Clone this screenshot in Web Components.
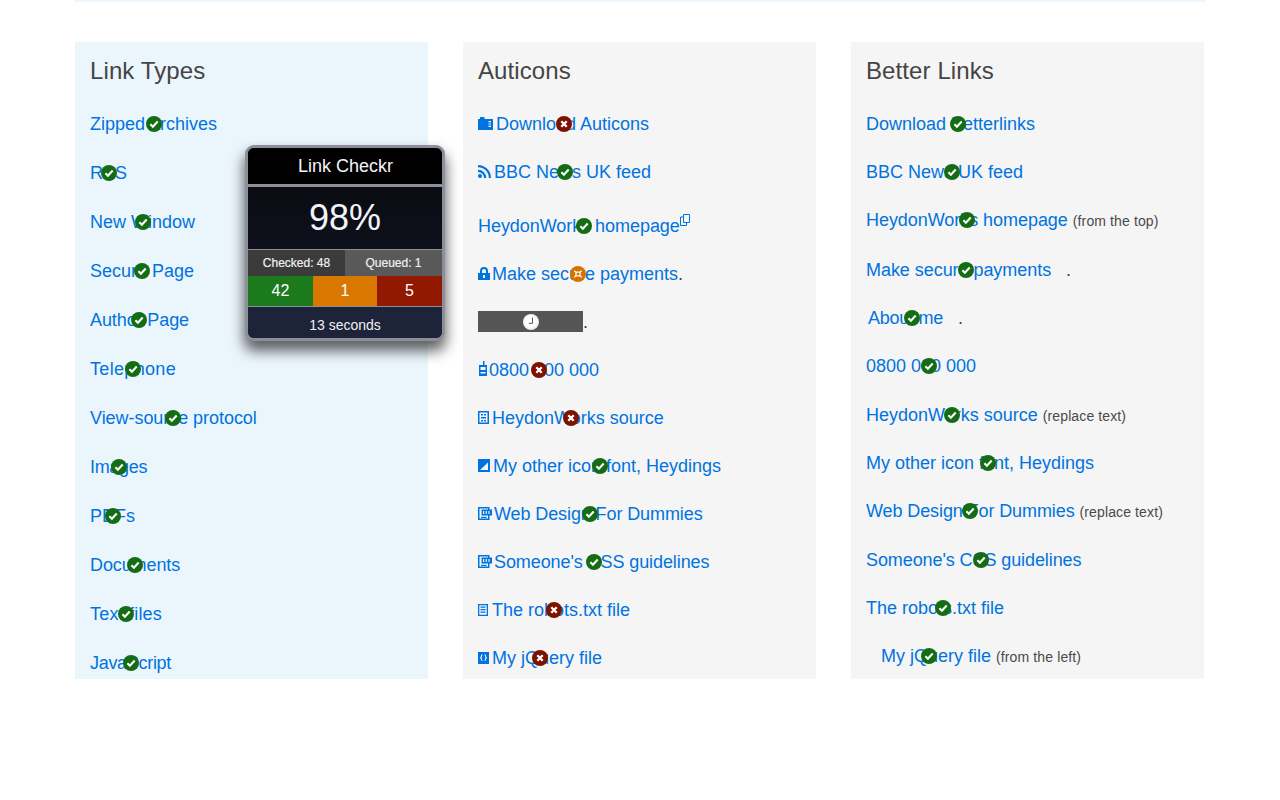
<!DOCTYPE html>
<html lang="en">
<head>
<meta charset="utf-8">
<title>Link Checkr</title>
<style>
html,body{margin:0;padding:0;background:#fff;height:800px;overflow:hidden}
body{font-family:"Liberation Sans",Arial,sans-serif;color:#3c3c3c}
</style>
</head>
<body>
<template id="t-page"><style>
:host{display:block;width:1130px;margin:0 auto 0 75px;border-top:2px solid #ebf6fc;padding-top:40px}
.grid{display:grid;grid-template-columns:repeat(3,353px);column-gap:35px;height:637px;overflow:hidden;position:relative}
</style><div class="grid"><slot></slot></div></template>

<template id="t-card"><style>
:host{display:block;background:#f5f5f5;padding:0 15px;height:637px;overflow:hidden;box-sizing:border-box}
:host([tint]){background:#ebf6fc}
h2{font:400 24px/28px "Liberation Sans",Arial,sans-serif;color:#444;margin:0;padding:15px 0 26px;letter-spacing:.1px}
</style><h2></h2><slot></slot></template>

<template id="t-row"><style>
:host{display:block;height:var(--h,48px);font-size:18px;line-height:26px;color:#3c3c3c;white-space:nowrap}
::slotted(small){font-size:14px;letter-spacing:.12px;color:#4a4a4a}
</style><slot></slot></template>

<template id="t-link"><style>
:host{display:inline-block;position:relative;color:#0073e0;line-height:26px;vertical-align:top}
:host([hidden-text]){background:#555;height:21px;width:105px;margin-top:2px}
.b{position:absolute;left:50%;top:50%;margin:-8px 0 0 -8px;width:16px;height:16px;border-radius:50%;display:flex;align-items:center;justify-content:center}
.ok{background:#146c14}.err{background:#7e1100}.warn{background:#d67300}.wait{background:radial-gradient(circle at 45% 45%,#fff 40%,#d8d8d8)}
svg{width:12px;height:12px;display:block}
</style><slot></slot><span class="b" aria-hidden="true"></span></template>

<template id="t-icon"><style>
:host{display:inline-block;width:var(--w,14px);height:14px;margin-right:var(--m,4px);vertical-align:0;color:#0073e0}
svg{display:block;width:100%;height:100%;overflow:visible}
</style><span></span></template>

<template id="t-panel"><style>
:host{display:block;position:absolute;left:170px;top:103px;width:200px;box-sizing:border-box;border:3px solid #8c8f99;border-radius:9px;background:#1d2338;color:#fff;overflow:hidden;text-align:center;font-family:"Liberation Sans",Arial,sans-serif;box-shadow:0 9px 14px 1px rgba(0,0,0,.62)}
.head{background:#000;height:36px;font-size:18px;line-height:36px;border-bottom:3px solid #8c8f99;color:#f4f4f8;padding-left:1px}
.pct{height:62px;line-height:62px;font-size:36px;color:#f2f3fa;background:linear-gradient(#0a0c12,#0e111c);border-bottom:1px solid #8c8f99}
.two{display:grid;grid-template-columns:97px 97px;height:25px;line-height:27px;font-size:12px;font-weight:400;border-bottom:1px solid #8c8f99;color:#f0f0f0;-webkit-text-stroke:.2px #f0f0f0}
.two span:first-child{background:#3b3b3b}.two span:last-child{background:#595959}
.three{display:grid;grid-template-columns:65px 64px 65px;height:30px;line-height:30px;font-size:16px;border-bottom:1px solid #8c8f99}
.g{background:#1b7a1b}.o{background:#d97800}.r{background:#901900}
.foot{height:31px;line-height:36px;font-size:14px;background:#1d2338;color:#f0f0f4}
</style>
<div class="head">Link Checkr</div>
<div class="pct">98%</div>
<div class="two"><span>Checked: 48</span><span>Queued: 1</span></div>
<div class="three"><span class="g">42</span><span class="o">1</span><span class="r">5</span></div>
<div class="foot">13 seconds</div>
</template>

<lc-page>
  <lc-card heading="Link Types" tint>
    <lc-row h="49"><lc-link s="ok">Zipped archives</lc-link></lc-row>
    <lc-row h="49"><lc-link s="ok">RSS</lc-link></lc-row>
    <lc-row h="49"><lc-link s="ok">New Window</lc-link></lc-row>
    <lc-row h="49"><lc-link s="ok">Secure Page</lc-link></lc-row>
    <lc-row h="49"><lc-link s="ok" style="letter-spacing:-.1px">Author Page</lc-link></lc-row>
    <lc-row h="49"><lc-link s="ok" style="letter-spacing:.33px">Telephone</lc-link></lc-row>
    <lc-row h="49"><lc-link s="ok" style="letter-spacing:-.05px">View-source protocol</lc-link></lc-row>
    <lc-row h="49"><lc-link s="ok" style="letter-spacing:-.33px">Images</lc-link></lc-row>
    <lc-row h="49"><lc-link s="ok">PDFs</lc-link></lc-row>
    <lc-row h="49"><lc-link s="ok" style="letter-spacing:-.1px">Documents</lc-link></lc-row>
    <lc-row h="49"><lc-link s="ok" style="letter-spacing:.2px">Text files</lc-link></lc-row>
    <lc-row h="49"><lc-link s="ok" style="letter-spacing:-.3px">JavaScript</lc-link></lc-row>
  </lc-card>
  <lc-card heading="Auticons">
    <lc-row h="48"><lc-link s="err"><lc-icon name="zip" w="15" m="3"></lc-icon>Download Auticons</lc-link></lc-row>
    <lc-row h="54"><lc-link s="ok"><lc-icon name="rss" w="13" m="3"></lc-icon>BBC News UK feed</lc-link></lc-row>
    <lc-row h="48"><lc-link s="ok"><span style="letter-spacing:-.05px">HeydonWorks homepage</span><lc-icon name="ext" w="10" m="0" style="vertical-align:4px"></lc-icon></lc-link></lc-row>
    <lc-row h="48"><lc-link s="warn"><lc-icon name="lock" w="12" m="2"></lc-icon>Make secure payments</lc-link>.</lc-row>
    <lc-row h="48"><lc-link s="wait" hidden-text></lc-link>.</lc-row>
    <lc-row h="48"><lc-link s="err"><lc-icon name="phone" w="9" m="2"></lc-icon>0800 000 000</lc-link></lc-row>
    <lc-row h="48"><lc-link s="err"><lc-icon name="src" w="11" m="3"></lc-icon>HeydonWorks source</lc-link></lc-row>
    <lc-row h="48"><lc-link s="ok"><lc-icon name="img" w="12" m="3"></lc-icon>My other icon font, Heydings</lc-link></lc-row>
    <lc-row h="48"><lc-link s="ok" style="letter-spacing:-.1px"><lc-icon name="pdf" w="14" m="2"></lc-icon>Web Design For Dummies</lc-link></lc-row>
    <lc-row h="48"><lc-link s="ok" style="letter-spacing:-.09px"><lc-icon name="doc" w="14" m="2"></lc-icon>Someone's CSS guidelines</lc-link></lc-row>
    <lc-row h="48"><lc-link s="err"><lc-icon name="txt" w="10" m="4"></lc-icon>The robots.txt file</lc-link></lc-row>
    <lc-row h="48"><lc-link s="err"><lc-icon name="js" w="11" m="3"></lc-icon>My jQuery file</lc-link></lc-row>
  </lc-card>
  <lc-card heading="Better Links">
    <lc-row h="48"><lc-link s="ok" style="padding-right:15px">Download Betterlinks</lc-link></lc-row>
    <lc-row h="48"><lc-link s="ok" style="padding-right:15px">BBC News UK feed</lc-link></lc-row>
    <lc-row h="50"><lc-link s="ok" style="letter-spacing:-.05px">HeydonWorks homepage</lc-link> <small>(from the top)</small></lc-row>
    <lc-row h="48"><lc-link s="ok" style="padding-right:15px;letter-spacing:-.05px">Make secure payments</lc-link>.</lc-row>
    <lc-row h="48"><lc-link s="ok" style="padding:0 15px 0 2px;letter-spacing:-.25px">About me</lc-link>.</lc-row>
    <lc-row h="49"><lc-link s="ok" style="padding-right:15px">0800 000 000</lc-link></lc-row>
    <lc-row h="48"><lc-link s="ok">HeydonWorks source</lc-link> <small>(replace text)</small></lc-row>
    <lc-row h="48"><lc-link s="ok" style="padding-right:15px">My other icon font, Heydings</lc-link></lc-row>
    <lc-row h="49"><lc-link s="ok" style="letter-spacing:-.1px">Web Design For Dummies</lc-link> <small>(replace text)</small></lc-row>
    <lc-row h="48"><lc-link s="ok" style="padding-right:15px;letter-spacing:-.09px">Someone's CSS guidelines</lc-link></lc-row>
    <lc-row h="48"><lc-link s="ok" style="padding-right:15px">The robots.txt file</lc-link></lc-row>
    <lc-row h="48"><lc-link s="ok" style="padding-left:15px">My jQuery file</lc-link> <small>(from the left)</small></lc-row>
  </lc-card>
  <lc-panel></lc-panel>
</lc-page>

<script>
const GLYPH={
 ok:'<svg viewBox="0 0 12 12"><path d="M2.4 6.200 4.900 8.700 9.700 3.500" fill="none" stroke="#fff" stroke-width="2.100"/></svg>',
 err:'<svg viewBox="0 0 12 12"><path d="M3.300 3.300 8.700 8.700M8.700 3.300 3.300 8.700" fill="none" stroke="#fff" stroke-width="2.300"/></svg>',
 warn:'<svg viewBox="0 0 12 12"><path d="M4 4.200h4v3.600H4zM2.300 2.800 4 4.200M9.700 2.800 8 4.200M2.300 9.200 4 7.800M9.700 9.200 8 7.800" fill="none" stroke="#fff" stroke-width="1.300"/></svg>',
 wait:'<svg viewBox="0 0 12 12"><path d="M7.500 1.700V7.300H3.800" fill="none" stroke="#555" stroke-width="1"/></svg>'
};
const ICON={
 zip:'<svg viewBox="0 0 15 14"><path fill="currentColor" d="M0 3h2V1h4.500v2H15v11H0z"/><path fill="#f5f5f5" d="M10.500 5h2.500v1.200h-2.500zM10.500 7.400h2.500v1.200h-2.500zM10.500 9.800h2.500V11h-2.500z"/></svg>',
 rss:'<svg viewBox="0 0 13 14"><circle cx="2" cy="12" r="2" fill="currentColor"/><path fill="none" stroke="currentColor" stroke-width="2.200" d="M0 6.800A7.200 7.200 0 0 1 7.200 14M0 2.100A11.900 11.900 0 0 1 11.900 14"/></svg>',
 ext:'<svg viewBox="0 0 10 14"><path fill="none" stroke="currentColor" d="M3.500 .5h6v8h-6zM3.500 3H.5v8.500h6V8.500"/></svg>',
 lock:'<svg viewBox="0 0 12 14"><path fill="currentColor" d="M0 7h12v7H0z"/><path fill="none" stroke="currentColor" stroke-width="2" d="M3 7V5a3 3 0 0 1 6 0v2"/><path fill="#f5f5f5" d="M5 9h2v3H5z"/></svg>',
 phone:'<svg viewBox="0 0 9 14"><path fill="currentColor" d="M5 -1h1.500v4H9v11H1V3h4z"/><path fill="#f5f5f5" d="M2.500 5h5v3h-5zM2.500 10h5v1.500h-5z"/></svg>',
 src:'<svg viewBox="0 0 11 14"><path fill="none" stroke="currentColor" stroke-width="1.500" d="M.75 1.750h9.500v11.500H.75z"/><path fill="currentColor" d="M3 4h2v1.500H3zM6 4h2v1.500H6zM3 7h5v1.500H3zM3 10h2v1.500H3zM6 10h2v1.500H6z"/></svg>',
 img:'<svg viewBox="0 0 12 14"><path fill="currentColor" d="M0 1h12v13H0z"/><path fill="#f5f5f5" d="M2 12 10 4.500V12z"/></svg>',
 pdf:'<svg viewBox="0 0 14 14"><path fill="none" stroke="currentColor" stroke-width="1.500" d="M.75 1.750h10v11.500h-10z"/><path fill="currentColor" d="M3.500 3.500H14v6H3.500z"/><path fill="#f5f5f5" d="M5 5h1.200v3H5zM7.700 5h1.200v3H7.700zM10.400 5h1.200v3h-1.200z"/><path fill="currentColor" d="M3 10.800h5.500V12H3z"/></svg>',
 doc:'<svg viewBox="0 0 14 14"><path fill="none" stroke="currentColor" stroke-width="1.500" d="M.75 1.750h10v11.500h-10z"/><path fill="currentColor" d="M3.500 3.500H14v6H3.500z"/><path fill="#f5f5f5" d="M5 5h1.200v3H5zM7.700 5h1.200v3H7.700zM10.400 5h1.200v3h-1.200z"/><path fill="currentColor" d="M3 10.800h5.500V12H3z"/></svg>',
 txt:'<svg viewBox="0 0 10 14"><path fill="none" stroke="currentColor" stroke-width="1.300" d="M.65 2.650h8.700v10.700H.65z"/><path fill="currentColor" d="M2.500 4.500h5v1.200h-5zM2.500 7h5v1.200h-5zM2.500 9.500h5v1.200h-5z"/></svg>',
 js:'<svg viewBox="0 0 11 14"><path fill="currentColor" d="M0 2h11v12H0z"/><path fill="none" stroke="#f5f5f5" stroke-width="1.100" d="M4.500 4.800c-1.200 0-1 1-1 1.500s-.7 1.200-1 1.500c.3.200 1 .7 1 1.200s-.2 1.500 1 1.500M6.500 4.800c1.200 0 1 1 1 1.500s.7 1.200 1 1.500c-.3.200-1 .7-1 1.200s.2 1.500-1 1.500"/></svg>'
};
function def(name,tid,init){
  customElements.define(name,class extends HTMLElement{
    constructor(){super();this.attachShadow({mode:'open'}).appendChild(document.getElementById(tid).content.cloneNode(true));}
    connectedCallback(){init&&init.call(this);}
  });
}
def('lc-page','t-page');
def('lc-card','t-card',function(){this.shadowRoot.querySelector('h2').textContent=this.getAttribute('heading');});
def('lc-row','t-row',function(){this.style.setProperty('--h',this.getAttribute('h')+'px');});
def('lc-link','t-link',function(){const s=this.getAttribute('s');const b=this.shadowRoot.querySelector('.b');b.classList.add(s);b.innerHTML=GLYPH[s];});
def('lc-icon','t-icon',function(){this.style.setProperty('--w',this.getAttribute('w')+'px');this.style.setProperty('--m',this.getAttribute('m')+'px');this.shadowRoot.querySelector('span').innerHTML=ICON[this.getAttribute('name')];});
def('lc-panel','t-panel');
</script>
</body>
</html>
